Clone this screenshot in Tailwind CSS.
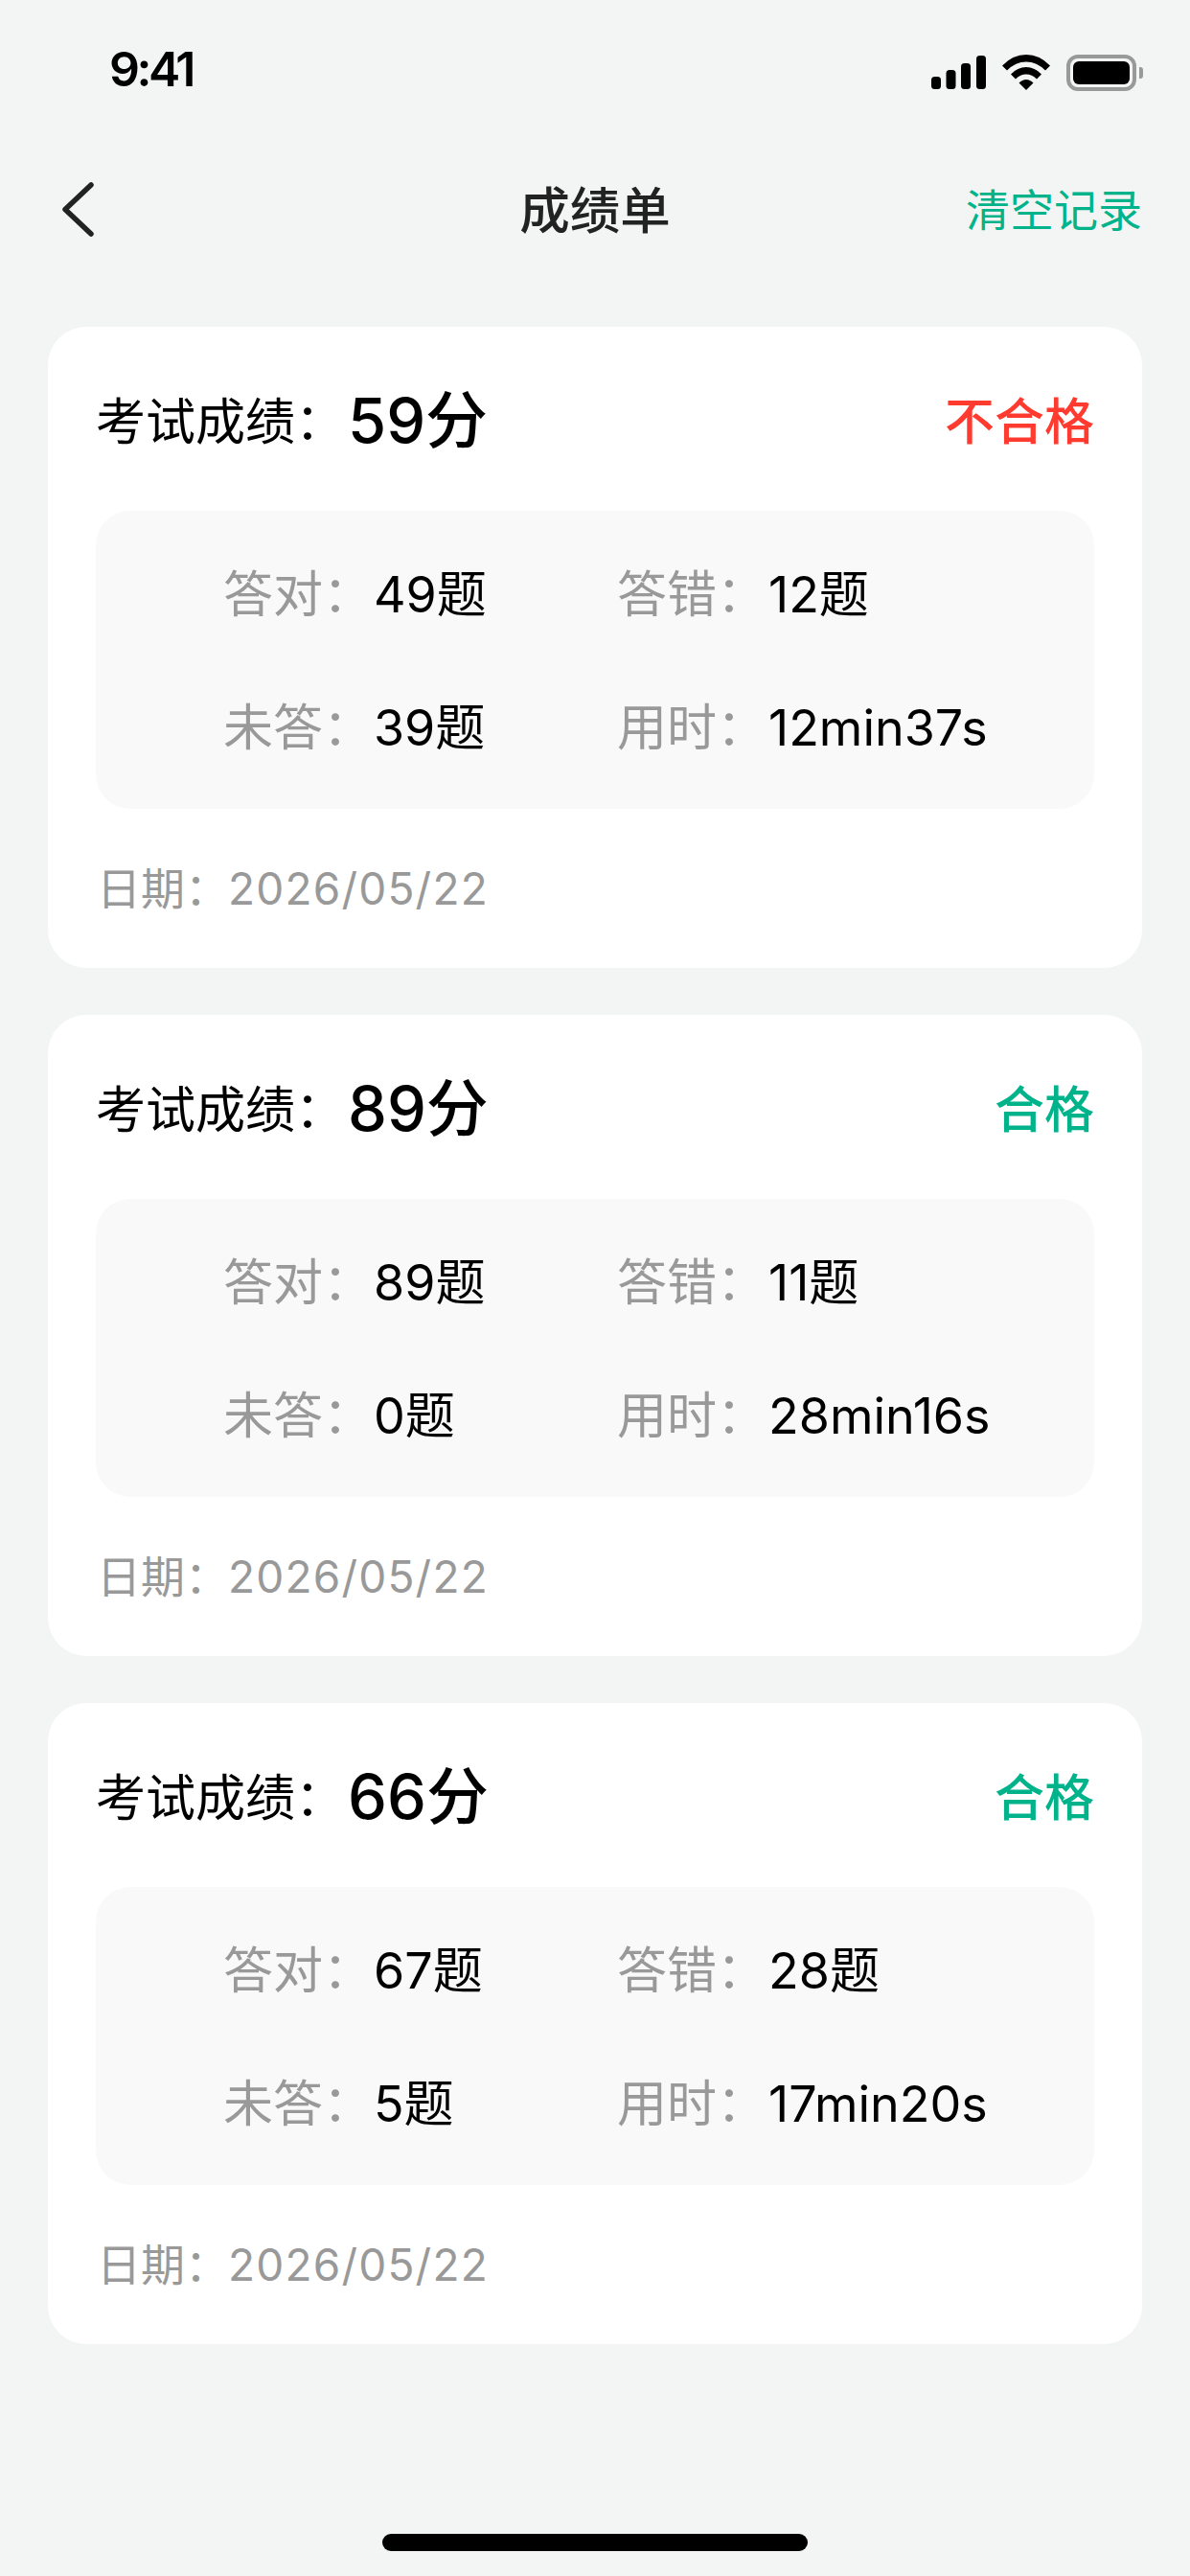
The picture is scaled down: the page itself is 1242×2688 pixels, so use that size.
<!DOCTYPE html>
<html lang="zh-CN">
<head>
  <meta charset="UTF-8" />
  <meta name="viewport" content="width=device-width, initial-scale=1.0" />
  <title>成绩单</title>
  <script src="https://cdn.jsdelivr.net/npm/@tailwindcss/browser@4"></script>
</head>
<body class="bg-[#f3f5f4] font-['Inter','Noto_Sans_CJK_SC',sans-serif] text-black">
  <div class="w-[1242px] h-[2688px] flex flex-col">

    <!-- status bar -->
    <div class="h-[148px] pl-[114px] pr-[49px] pt-[47px] flex justify-between items-start">
      <span class="text-[50px] leading-[50px] font-semibold tracking-[-3.5px]">9:41</span>
      <div class="flex items-start pt-[10px]">
        <svg width="57" height="35" viewBox="0 0 57 35" class="mt-[1px]">
          <rect x="0" y="22" width="10" height="13" rx="3.5" />
          <rect x="15.5" y="15" width="10" height="20" rx="3.5" />
          <rect x="31" y="8" width="10" height="27" rx="3.5" />
          <rect x="47" y="0" width="10" height="35" rx="3.5" />
        </svg>
        <svg width="50" height="37" viewBox="0 0 50 37" class="ml-[17px]">
          <path d="M0 11.5Q11 0 25 0Q39 0 50 11.5L45 16.5Q36 7.5 25 7.5Q14 7.5 5 16.5Z" />
          <path d="M9 20.5Q16 13 25 13Q34 13 41 20.5L36 25.5Q31 20.5 25 20.5Q19 20.5 14 25.5Z" />
          <path d="M17.5 29.5Q21 26 25 26Q29 26 32.5 29.5L25 37Z" />
        </svg>
        <div class="ml-[17px] w-[73px] h-[38px] border-[4px] border-[#999999] rounded-[12px] p-[3px]">
          <div class="w-full h-full bg-black rounded-[6px]"></div>
        </div>
        <div class="ml-[3px] mt-[13px] w-[4px] h-[12px] bg-[#999999] rounded-r-[3px]"></div>
      </div>
    </div>

    <!-- nav -->
    <div class="relative h-[144px] pl-[62px] pr-[50px] flex justify-between items-center">
      <svg width="38" height="62" viewBox="0 0 38 62" fill="none" stroke="#222222" stroke-width="5.5" stroke-linecap="round" stroke-linejoin="round">
        <path d="M33 4L6 29.5L33 55" />
      </svg>
      <h1 class="absolute left-0 right-0 text-center text-[52.5px] leading-[60px] font-medium text-[#222222]">成绩单</h1>
      <button class="mb-[2px] text-[46px] leading-[60px] text-[#00b38a]">清空记录</button>
    </div>

    <div class="mt-[49px] px-[50px] flex flex-col gap-[49px]">

      <div class="bg-white rounded-[40px] px-[50px] pt-[67px] pb-[53px]">
        <div class="h-[60px] mb-[65px] flex justify-between items-center">
          <div class="flex items-start">
            <span class="pt-[5px] text-[52px] leading-[60px] w-[263px]">考试成绩&#xFF1A;</span>
            <span class="mt-[3px] text-[65px] leading-[60px] font-medium">59分</span>
          </div>
          <span class="pt-[6px] text-[52px] leading-[60px] font-medium text-[#ff3b30]">不合格</span>
        </div>
        <div class="bg-[#f9f9f9] rounded-[36px] h-[311px] pl-[133px] pt-[58px] grid grid-cols-[411px_1fr] auto-rows-[60px] gap-y-[79px] text-[52px] leading-[60px]">
          <div class="flex"><span class="w-[157px] text-[#999999]">答对&#xFF1A;</span><span>49题</span></div>
          <div class="flex"><span class="w-[158px] text-[#999999]">答错&#xFF1A;</span><span>12题</span></div>
          <div class="flex"><span class="w-[157px] text-[#999999]">未答&#xFF1A;</span><span>39题</span></div>
          <div class="flex"><span class="w-[158px] text-[#999999]">用时&#xFF1A;</span><span>12min37s</span></div>
        </div>
        <div class="mt-[53px] h-[60px] pl-[1px] flex items-center text-[46px] leading-[60px] text-[#999999]">
          <span class="w-[137px] shrink-0 whitespace-nowrap">日期&#xFF1A;</span><span class="tracking-[1.2px]">2026/05/22</span>
        </div>
      </div>

      <div class="bg-white rounded-[40px] px-[50px] pt-[67px] pb-[53px]">
        <div class="h-[60px] mb-[65px] flex justify-between items-center">
          <div class="flex items-start">
            <span class="pt-[5px] text-[52px] leading-[60px] w-[263px]">考试成绩&#xFF1A;</span>
            <span class="mt-[3px] text-[65px] leading-[60px] font-medium">89分</span>
          </div>
          <span class="pt-[6px] text-[52px] leading-[60px] font-medium text-[#00b38a]">合格</span>
        </div>
        <div class="bg-[#f9f9f9] rounded-[36px] h-[311px] pl-[133px] pt-[58px] grid grid-cols-[411px_1fr] auto-rows-[60px] gap-y-[79px] text-[52px] leading-[60px]">
          <div class="flex"><span class="w-[157px] text-[#999999]">答对&#xFF1A;</span><span>89题</span></div>
          <div class="flex"><span class="w-[158px] text-[#999999]">答错&#xFF1A;</span><span>11题</span></div>
          <div class="flex"><span class="w-[157px] text-[#999999]">未答&#xFF1A;</span><span>0题</span></div>
          <div class="flex"><span class="w-[158px] text-[#999999]">用时&#xFF1A;</span><span>28min16s</span></div>
        </div>
        <div class="mt-[53px] h-[60px] pl-[1px] flex items-center text-[46px] leading-[60px] text-[#999999]">
          <span class="w-[137px] shrink-0 whitespace-nowrap">日期&#xFF1A;</span><span class="tracking-[1.2px]">2026/05/22</span>
        </div>
      </div>

      <div class="bg-white rounded-[40px] px-[50px] pt-[67px] pb-[53px]">
        <div class="h-[60px] mb-[65px] flex justify-between items-center">
          <div class="flex items-start">
            <span class="pt-[5px] text-[52px] leading-[60px] w-[263px]">考试成绩&#xFF1A;</span>
            <span class="mt-[3px] text-[65px] leading-[60px] font-medium">66分</span>
          </div>
          <span class="pt-[6px] text-[52px] leading-[60px] font-medium text-[#00b38a]">合格</span>
        </div>
        <div class="bg-[#f9f9f9] rounded-[36px] h-[311px] pl-[133px] pt-[58px] grid grid-cols-[411px_1fr] auto-rows-[60px] gap-y-[79px] text-[52px] leading-[60px]">
          <div class="flex"><span class="w-[157px] text-[#999999]">答对&#xFF1A;</span><span>67题</span></div>
          <div class="flex"><span class="w-[158px] text-[#999999]">答错&#xFF1A;</span><span>28题</span></div>
          <div class="flex"><span class="w-[157px] text-[#999999]">未答&#xFF1A;</span><span>5题</span></div>
          <div class="flex"><span class="w-[158px] text-[#999999]">用时&#xFF1A;</span><span>17min20s</span></div>
        </div>
        <div class="mt-[53px] h-[60px] pl-[1px] flex items-center text-[46px] leading-[60px] text-[#999999]">
          <span class="w-[137px] shrink-0 whitespace-nowrap">日期&#xFF1A;</span><span class="tracking-[1.2px]">2026/05/22</span>
        </div>
      </div>

    </div>

    <!-- home indicator -->
    <div class="mt-auto mb-[26px] self-center w-[444px] h-[18px] bg-black rounded-full"></div>
  </div>
</body>
</html>
